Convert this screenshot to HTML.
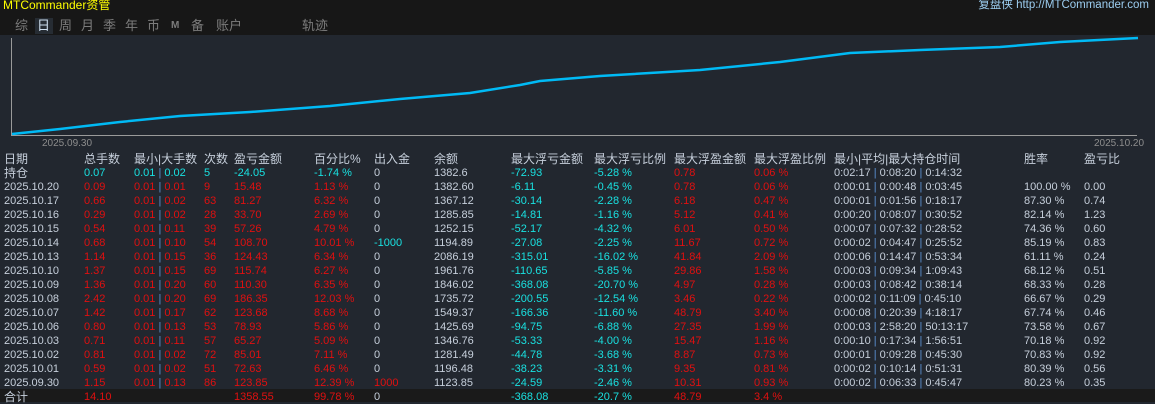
<!DOCTYPE html>
<html><head><meta charset="utf-8"><style>
*{margin:0;padding:0;box-sizing:border-box}
body{width:1155px;height:402px;background:#22272f;overflow:hidden;position:relative;font-family:"Liberation Sans","Noto Sans CJK SC",sans-serif;font-size:11px;color:#c6cfdb}
#top{position:absolute;left:0;top:0;width:1155px;height:35px;background:#171717}
.a{position:absolute;white-space:nowrap;line-height:14px}
.nav{position:absolute;top:18px;font-size:13px;color:#7c7c7c;line-height:16px}
.r{color:#e01010}.c{color:#19e0e0}.w{color:#c6cfdb}.b{color:#5a8fd0}
#tot{position:absolute;left:0;top:389px;width:1155px;height:13px;background:#1a1a1a}
</style></head><body>
<div id="top"></div>
<div class="a" style="left:3px;top:-2px;color:#ffff00;font-size:12px">MTCommander资管</div>
<div class="a" style="right:6px;top:-2px;color:#9ccdf0;font-size:11.5px">复盘侠 http://MTCommander.com</div>
<div style="position:absolute;left:35px;top:18px;width:18px;height:16px;background:#262c33"></div>
<div class="nav" style="left:15px">综</div>
<div class="nav" style="left:37px;color:#cfe0f0">日</div>
<div class="nav" style="left:59px">周</div>
<div class="nav" style="left:81px">月</div>
<div class="nav" style="left:103px">季</div>
<div class="nav" style="left:125px">年</div>
<div class="nav" style="left:147px">币</div>
<div class="nav" style="left:171px;font-size:10px;font-weight:bold">M</div>
<div class="nav" style="left:191px">备</div>
<div class="nav" style="left:216px">账户</div>
<div class="nav" style="left:302px">轨迹</div>
<svg style="position:absolute;left:0;top:0" width="1155" height="150">
<line x1="11.5" y1="38" x2="11.5" y2="135" stroke="#9a9a9a" stroke-width="1"/>
<line x1="11" y1="135.5" x2="1137" y2="135.5" stroke="#9a9a9a" stroke-width="1"/>
<polyline fill="none" stroke="#00baf5" stroke-width="2.5" points="12,134 60,129 120,122 180,116 250,112 330,106 400,99 470,93 520,85 540,81 600,76 700,70 780,62 850,53 920,50 1000,47 1060,42 1138,38"/>
<text x="42" y="146" fill="#8d8d8d" font-size="10" font-family="Liberation Sans">2025.09.30</text>
<text x="1094" y="146" fill="#8d8d8d" font-size="10" font-family="Liberation Sans">2025.10.20</text>
</svg>
<div id="tot"></div>
<div id="t"></div>
<script>
var X=[4,84,134,204,234,314,374,434,511,594,674,754,834,1024,1084];
var H=["日期","总手数","最小|大手数","次数","盈亏金额","百分比%","出入金","余额","最大浮亏金额","最大浮亏比例","最大浮盈金额","最大浮盈比例","最小|平均|最大持仓时间","胜率","盈亏比"];
var R=[
["持仓","0.07","0.01 | 0.02","5","-24.05","-1.74 %","0","1382.6","-72.93","-5.28 %","0.78","0.06 %","0:02:17 | 0:08:20 | 0:14:32","",""],
["2025.10.20","0.09","0.01 | 0.01","9","15.48","1.13 %","0","1382.60","-6.11","-0.45 %","0.78","0.06 %","0:00:01 | 0:00:48 | 0:03:45","100.00 %","0.00"],
["2025.10.17","0.66","0.01 | 0.02","63","81.27","6.32 %","0","1367.12","-30.14","-2.28 %","6.18","0.47 %","0:00:01 | 0:01:56 | 0:18:17","87.30 %","0.74"],
["2025.10.16","0.29","0.01 | 0.02","28","33.70","2.69 %","0","1285.85","-14.81","-1.16 %","5.12","0.41 %","0:00:20 | 0:08:07 | 0:30:52","82.14 %","1.23"],
["2025.10.15","0.54","0.01 | 0.11","39","57.26","4.79 %","0","1252.15","-52.17","-4.32 %","6.01","0.50 %","0:00:07 | 0:07:32 | 0:28:52","74.36 %","0.60"],
["2025.10.14","0.68","0.01 | 0.10","54","108.70","10.01 %","-1000","1194.89","-27.08","-2.25 %","11.67","0.72 %","0:00:02 | 0:04:47 | 0:25:52","85.19 %","0.83"],
["2025.10.13","1.14","0.01 | 0.15","36","124.43","6.34 %","0","2086.19","-315.01","-16.02 %","41.84","2.09 %","0:00:06 | 0:14:47 | 0:53:34","61.11 %","0.24"],
["2025.10.10","1.37","0.01 | 0.15","69","115.74","6.27 %","0","1961.76","-110.65","-5.85 %","29.86","1.58 %","0:00:03 | 0:09:34 | 1:09:43","68.12 %","0.51"],
["2025.10.09","1.36","0.01 | 0.20","60","110.30","6.35 %","0","1846.02","-368.08","-20.70 %","4.97","0.28 %","0:00:03 | 0:08:42 | 0:38:14","68.33 %","0.28"],
["2025.10.08","2.42","0.01 | 0.20","69","186.35","12.03 %","0","1735.72","-200.55","-12.54 %","3.46","0.22 %","0:00:02 | 0:11:09 | 0:45:10","66.67 %","0.29"],
["2025.10.07","1.42","0.01 | 0.17","62","123.68","8.68 %","0","1549.37","-166.36","-11.60 %","48.79","3.40 %","0:00:08 | 0:20:39 | 4:18:17","67.74 %","0.46"],
["2025.10.06","0.80","0.01 | 0.13","53","78.93","5.86 %","0","1425.69","-94.75","-6.88 %","27.35","1.99 %","0:00:03 | 2:58:20 | 50:13:17","73.58 %","0.67"],
["2025.10.03","0.71","0.01 | 0.11","57","65.27","5.09 %","0","1346.76","-53.33","-4.00 %","15.47","1.16 %","0:00:10 | 0:17:34 | 1:56:51","70.18 %","0.92"],
["2025.10.02","0.81","0.01 | 0.02","72","85.01","7.11 %","0","1281.49","-44.78","-3.68 %","8.87","0.73 %","0:00:01 | 0:09:28 | 0:45:30","70.83 %","0.92"],
["2025.10.01","0.59","0.01 | 0.02","51","72.63","6.46 %","0","1196.48","-38.23","-3.31 %","9.35","0.81 %","0:00:02 | 0:10:14 | 0:51:31","80.39 %","0.56"],
["2025.09.30","1.15","0.01 | 0.13","86","123.85","12.39 %","1000","1123.85","-24.59","-2.46 %","10.31","0.93 %","0:00:02 | 0:06:33 | 0:45:47","80.23 %","0.35"],
["合计","14.10","","","1358.55","99.78 %","0","","-368.08","-20.7 %","48.79","3.4 %","","",""]
];
var h="";
for(var i=0;i<H.length;i++)h+='<div class="a" style="left:'+X[i]+'px;top:152px;font-size:12px">'+H[i]+'</div>';
for(var j=0;j<R.length;j++){var y=165+j*14;var row=R[j];
for(var i=0;i<15;i++){var cl="w";
if(j==0){cl=(i>=1&&i<=5)||i==8||i==9?"c":(i==10||i==11?"r":"w");}
else{if(i>=1&&i<=5)cl="r";if(i==8||i==9)cl="c";if(i==10||i==11)cl="r";if(i==6)cl=row[6]=="-1000"?"c":(row[6]=="1000"?"r":"w");}
var t=row[i];if(i==2||i==12)t=t.replace(/\|/g,'<span class="b">|</span>');
var fs=(i==0&&(j==0||j==16))?12:11;
h+='<div class="a '+cl+'" style="left:'+X[i]+'px;top:'+(y+1)+'px;font-size:'+fs+'px">'+t+'</div>';}}
document.getElementById("t").innerHTML=h;
</script>
</body></html>
